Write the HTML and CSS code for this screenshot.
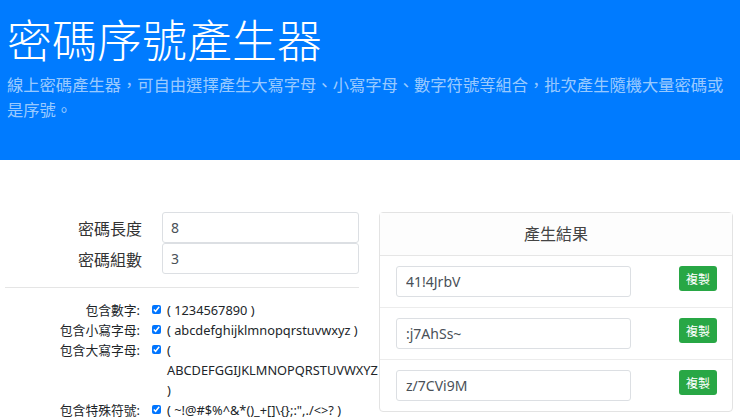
FILE: index.html
```html
<!DOCTYPE html>
<html lang="zh-Hant">
<head>
    <meta charset="UTF-8">
    <meta name="viewport" content="width=device-width, initial-scale=1.0">
    <title>密碼序號產生器</title>
    <link rel="stylesheet" href="styles.css">
</head>
<body>
    <div class="jumbotron">
        <h1>密碼序號產生器</h1>
        <p>線上密碼產生器，可自由選擇產生大寫字母、小寫字母、數字符號等組合，批次產生隨機大量密碼或<br>是序號。</p>
    </div>

    <div class="main">
        <div class="settings">
            <div class="field">
                <label for="len">密碼長度</label>
                <input type="text" id="len" class="form-input" value="8">
            </div>
            <div class="field">
                <label for="count">密碼組數</label>
                <input type="text" id="count" class="form-input" value="3">
            </div>

            <hr>

            <div class="check">
                <label>包含數字:</label>
                <input type="checkbox" checked>
                <span>( 1234567890 )</span>
            </div>
            <div class="check">
                <label>包含小寫字母:</label>
                <input type="checkbox" checked>
                <span>( abcdefghijklmnopqrstuvwxyz )</span>
            </div>
            <div class="check">
                <label>包含大寫字母:</label>
                <input type="checkbox" checked>
                <span>( ABCDEFGGIJKLMNOPQRSTUVWXYZ )</span>
            </div>
            <div class="check">
                <label>包含特殊符號:</label>
                <input type="checkbox" checked>
                <span>( ~!@#$%^&amp;*()_+[]\{};:",./&lt;&gt;? )</span>
            </div>
        </div>

        <div class="card">
            <div class="card-header">產生結果</div>
            <div class="result-row">
                <input type="text" class="form-input result" value="41!4JrbV">
                <button class="copy">複製</button>
            </div>
            <div class="result-row">
                <input type="text" class="form-input result" value=":j7AhSs~">
                <button class="copy">複製</button>
            </div>
            <div class="result-row">
                <input type="text" class="form-input result" value="z/7CVi9M">
                <button class="copy">複製</button>
            </div>
        </div>
    </div>
</body>
</html>
```

FILE: styles.css
```css
body {
    margin: 0;
    font-family: "Noto Sans", "Noto Sans CJK TC", sans-serif;
    color: #212529;
    background-color: #fff;
}

.jumbotron {
    background-color: #007bff;
    color: #fff;
    height: 160px;
    box-sizing: border-box;
    padding: 14px 0 0 7px;
}

.jumbotron h1 {
    margin: 0;
    font-size: 45px;
    line-height: 54px;
    font-weight: 300;
}

.jumbotron p {
    margin: 5px 0 0;
    font-size: 16.3px;
    line-height: 25px;
    white-space: nowrap;
    color: rgba(255, 255, 255, 0.62);
}

.main {
    display: flex;
    padding: 52px 0 0 5px;
}

.settings {
    width: 354px;
}

.field {
    display: grid;
    grid-template-columns: 137px 197px;
    column-gap: 20px;
    align-items: center;
}

.field label {
    text-align: right;
    font-size: 16px;
    color: #333;
}

.form-input {
    box-sizing: border-box;
    height: 31px;
    padding: 0 8px;
    font-family: inherit;
    font-size: 14px;
    color: #495057;
    border: 1px solid #dcdfe3;
    border-radius: 3px;
    background-color: #fff;
}

hr {
    margin: 13px 0 12px;
    border: 0;
    border-top: 1px solid rgba(0, 0, 0, 0.1);
}

.check {
    display: grid;
    grid-template-columns: 137px 9px 200px;
    column-gap: 8px;
    font-size: 12.8px;
    line-height: 20px;
}

.check label {
    text-align: right;
    padding-right: 2px;
}

.check input {
    width: 9px;
    height: 9px;
    margin: 5px 0 0 2px;
    accent-color: #0075ff;
}

.card {
    box-sizing: border-box;
    margin-left: 20px;
    width: 354px;
    align-self: flex-start;
    border: 1px solid #e3e3e3;
    border-radius: 4px;
}

.card-header {
    height: 42px;
    line-height: 42px;
    text-align: center;
    font-size: 16px;
    color: #444;
    background-color: #fdfdfd;
    border-bottom: 1px solid #e6e6e6;
}

.result-row {
    display: flex;
    justify-content: space-between;
    align-items: flex-start;
    padding: 10px 15px 10px 16px;
}

.result-row + .result-row {
    border-top: 1px solid #ececec;
}

.result {
    width: 235px;
    padding: 0 9px;
}

.copy {
    height: 25px;
    padding: 0 7px;
    font-family: inherit;
    font-size: 12px;
    color: #fff;
    background-color: #28a745;
    border: none;
    border-radius: 3px;
    cursor: pointer;
}
```
